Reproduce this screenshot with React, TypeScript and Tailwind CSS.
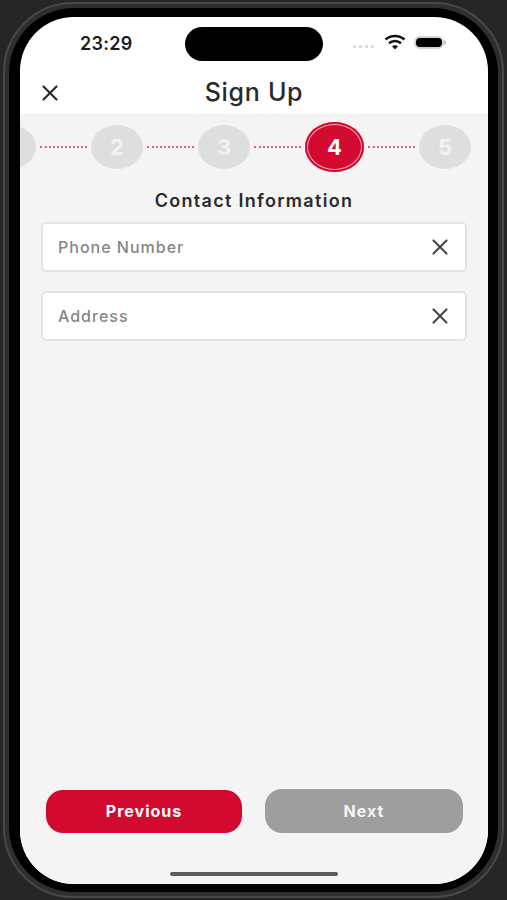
import { X } from 'lucide-react'

const font = { fontFamily: 'Inter, "Liberation Sans", sans-serif' }

function Step({ label }: { label?: string }) {
  return (
    <div className="flex h-[44px] w-[52px] shrink-0 items-center justify-center rounded-[50%] bg-[#dedede] text-[22px] font-bold text-[#f2f2f2]">
      {label}
    </div>
  )
}

function Dots() {
  return <div className="mx-[4px] h-0 w-[47px] shrink-0 border-t-2 border-dotted border-[#e0607c]" />
}

function Field({ placeholder }: { placeholder: string }) {
  return (
    <div className="flex h-[50px] items-center justify-between rounded-[5px] border-2 border-[#e3e3e3] bg-white pl-[15px] pr-[12px]">
      <span className="text-[16px] font-medium tracking-[1px] text-[#858585]">{placeholder}</span>
      <X className="h-[26px] w-[26px] text-[#4a4a4a]" strokeWidth={2} />
    </div>
  )
}

export default function App() {
  return (
    <div className="h-[900px] w-[507px] overflow-hidden bg-[#262626] px-[3px] py-[2px]" style={font}>
      <div className="h-[896px] w-[501px] rounded-[70px] border-2 border-[#484848] bg-[#2e2e2e] p-[4px]">
        <div className="h-[884px] w-[489px] rounded-[65px] bg-black pb-[8px] pl-[11px] pr-[10px] pt-[9px]">
          <div className="flex h-[867px] w-[468px] flex-col overflow-hidden rounded-[54px] bg-white">
            <div className="flex h-[97px] shrink-0 flex-col">
              <div className="flex h-[53px] shrink-0 items-start">
                <div className="w-[165px] pl-[60px] pt-[15px]">
                  <span className="text-[18px] font-semibold leading-[22px] tracking-[0.3px] text-[#1c1c1c]">23:29</span>
                </div>
                <div className="mt-[10px] h-[34px] w-[138px] shrink-0 rounded-full bg-black" />
                <div className="ml-[30px] mt-[17px] flex items-center">
                  <div className="mr-[10px] mt-[9px] flex gap-[3px]">
                    <span className="h-[3px] w-[3px] rounded-full bg-[#d4d4d4]" />
                    <span className="h-[3px] w-[3px] rounded-full bg-[#d4d4d4]" />
                    <span className="h-[3px] w-[3px] rounded-full bg-[#d4d4d4]" />
                    <span className="h-[3px] w-[3px] rounded-full bg-[#d4d4d4]" />
                  </div>
                  <svg width="22" height="16" viewBox="0 0 22 16" className="mr-[8px]">
                    <path d="M1.5 5.5C7 .8 15 .8 20.5 5.5" fill="none" stroke="#111" strokeWidth="2.6" />
                    <path d="M5 9.2c3.5-3 8.5-3 12 0" fill="none" stroke="#111" strokeWidth="2.6" />
                    <path d="M8 12.2c1.8-1.3 4.2-1.3 6 0L11 15.5z" fill="#111" />
                  </svg>
                  <div className="flex items-center">
                    <div className="h-[13px] w-[30px] rounded-[6px] border-2 border-[#d4d4d4] bg-black" />
                    <div className="h-[5px] w-[2px] rounded-r-sm bg-[#c8c8c8]" />
                  </div>
                </div>
              </div>
              <div className="relative flex flex-1 items-center justify-center pt-[2px]">
                <X className="absolute left-[17px] top-[10px] h-[26px] w-[26px] text-[#2b2b2b]" strokeWidth={2} />
                <span className="text-[25px] font-medium tracking-[0.7px] text-[#2a2a2a]">Sign Up</span>
              </div>
            </div>
            <div className="flex min-h-0 flex-1 flex-col bg-[#f4f4f4]">
              <div className="mt-[8px] flex h-[50px] shrink-0 items-center">
                <div className="-ml-[36px] flex items-center">
                  <Step />
                  <Dots />
                  <Step label="2" />
                  <Dots />
                  <Step label="3" />
                  <Dots />
                  <div className="flex h-[50px] w-[59px] shrink-0 items-center justify-center rounded-[50%] bg-[#d30a2f] text-[22px] font-bold text-white shadow-[inset_0_0_0_2px_#d30a2f,inset_0_0_0_3px_#f4a8b8]">
                    4
                  </div>
                  <Dots />
                  <Step label="5" />
                </div>
              </div>
              <h2 className="mt-[18px] text-center text-[18px] font-semibold leading-[22px] tracking-[1.3px] text-[#2b2b2b]">
                Contact Information
              </h2>
              <div className="mx-[21px] mt-[10px] flex flex-col gap-[19px]">
                <Field placeholder="Phone Number" />
                <Field placeholder="Address" />
              </div>
              <div className="mb-[39px] mt-auto flex items-center pl-[26px]">
                <button className="h-[43px] w-[196px] rounded-[17px] bg-[#d30a2f] text-[16px] font-bold tracking-[1px] text-white">
                  Previous
                </button>
                <button className="ml-[23px] h-[44px] w-[198px] rounded-[17px] bg-[#9e9e9e] text-[16px] font-bold tracking-[1px] text-[#f4f4f4]">
                  Next
                </button>
              </div>
              <div className="mx-auto mb-[8px] h-[4px] w-[168px] rounded-full bg-[#5c5c5c]" />
            </div>
          </div>
        </div>
      </div>
    </div>
  )
}
